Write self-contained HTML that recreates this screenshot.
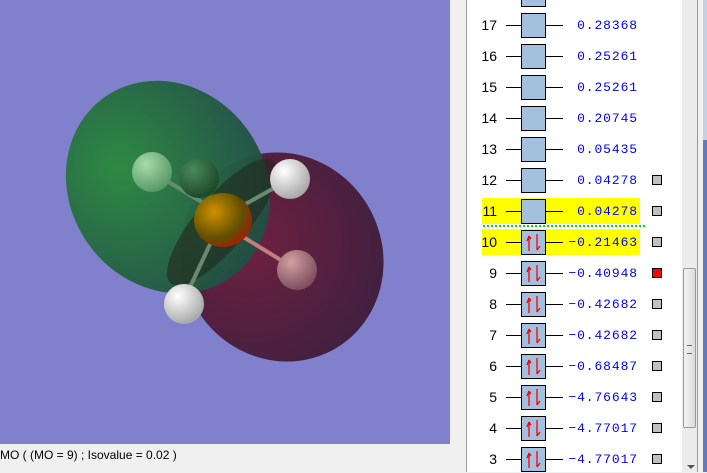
<!DOCTYPE html><html><head><style>
body{margin:0;width:707px;height:472px;overflow:hidden;background:#f0f0f0;position:relative;font-family:"Liberation Sans",sans-serif}
#vp{position:absolute;left:0;top:0;width:450px;height:444px;background:#8080cc}
#st{position:absolute;left:0;top:448px;font-size:12px;color:#000}
#list{position:absolute;left:466px;top:0;width:216px;height:472px;background:#fff;border-left:1px solid #a0a0a0}
.r{position:absolute;left:0;width:216px;height:26px;font-family:"Liberation Mono",monospace;font-size:13px}
.n{position:absolute;right:185px;top:4px;color:#000;font-family:"Liberation Sans",sans-serif;font-size:14px}
.l1{position:absolute;left:40px;width:15px;top:12px;border-top:1px solid #000}
.l2{position:absolute;left:80px;width:17px;top:12px;border-top:1px solid #000}
.b{position:absolute;left:55px;top:0;width:23px;height:23px;border:1px solid #000;background:#a3c0df}
.v{position:absolute;right:44px;top:5px;color:#0000ff;letter-spacing:0.9px}
.s{position:absolute;left:186px;top:7px;width:8px;height:8px;border:1px solid #000;background:#c0c0c0}
.hl{position:absolute;left:15px;width:158px;height:26px;background:#ffff00}
#sb{position:absolute;left:682px;top:0;width:15px;height:472px;background:#ececec;border-right:1px solid #999}
#th{position:absolute;left:683px;top:268px;width:13px;height:160px;background:linear-gradient(90deg,#f3f3f3,#dcdcdc);border:1px solid #999;border-radius:2px;box-sizing:border-box}
</style></head><body>
<div id="vp"><svg width="450" height="444">
<defs>
<radialGradient id="gg" cx="0.35" cy="0.3" r="0.8"><stop offset="0" stop-color="#2a8a3c"/><stop offset="1" stop-color="#1f4a44"/></radialGradient>
<radialGradient id="rg" cx="0.4" cy="0.35" r="0.8"><stop offset="0" stop-color="#702040"/><stop offset="1" stop-color="#3a2040"/></radialGradient>
<radialGradient id="wh" cx="0.35" cy="0.3" r="0.7"><stop offset="0" stop-color="#fff"/><stop offset="1" stop-color="#aaa"/></radialGradient>
<radialGradient id="lg" cx="0.35" cy="0.3" r="0.7"><stop offset="0" stop-color="#a8dca8"/><stop offset="1" stop-color="#5a9a6a"/></radialGradient>
<radialGradient id="dg" cx="0.35" cy="0.3" r="0.7"><stop offset="0" stop-color="#4a8a5a"/><stop offset="1" stop-color="#1e4a2a"/></radialGradient>
<radialGradient id="pk" cx="0.35" cy="0.3" r="0.7"><stop offset="0" stop-color="#d0a0a0"/><stop offset="1" stop-color="#805060"/></radialGradient>
<radialGradient id="yl" cx="0.35" cy="0.35" r="0.7"><stop offset="0" stop-color="#d09000"/><stop offset="0.7" stop-color="#605000"/><stop offset="1" stop-color="#a02000"/></radialGradient>
</defs>
<ellipse cx="282" cy="257" rx="100" ry="106" fill="url(#rg)" transform="rotate(-30 282 257)"/>
<ellipse cx="168" cy="187" rx="98" ry="110" fill="url(#gg)" opacity="0.95" transform="rotate(-35 168 187)"/>
<ellipse cx="222" cy="222" rx="26" ry="80" fill="#22281c" opacity="0.6" transform="rotate(40 222 222)"/>
<g stroke="#6a8a70" stroke-width="4">
<line x1="152" y1="172" x2="215" y2="210"/><line x1="290" y1="179" x2="235" y2="210"/>
<line x1="184" y1="300" x2="212" y2="240"/><line x1="297" y1="270" x2="240" y2="235" stroke="#c08080"/>
</g>
<circle cx="199" cy="178" r="20" fill="url(#dg)"/>
<circle cx="152" cy="172" r="20" fill="url(#lg)"/>
<ellipse cx="223" cy="220" rx="29" ry="27" fill="url(#yl)"/>
<circle cx="290" cy="179" r="20" fill="url(#wh)"/>
<circle cx="184" cy="304" r="20" fill="url(#wh)"/>
<circle cx="297" cy="270" r="20" fill="url(#pk)"/>
</svg></div>
<div id="st">MO ( (MO = 9) ; Isovalue = 0.02 )</div>
<div id="list">
<div class="hl" style="top:198px"></div><div class="hl" style="top:229px"></div>
<div style="position:absolute;left:16px;top:225px;width:162px;border-top:2px dotted #00e000"></div>
</div>
<div id="sb"></div><div id="th"><div style="position:absolute;left:3px;top:76px;width:5px;height:7px;border-top:1px solid #666;border-bottom:1px solid #666"></div></div>
<div style="position:absolute;left:687px;top:465px;border:4px solid transparent;border-top:4px solid #555"></div>
<div style="position:absolute;left:703px;top:0;width:4px;height:140px;background:#c8d0e0"></div>
<div style="position:absolute;left:703px;top:140px;width:4px;height:332px;background:#6a78b8"></div>
<div id="rows" style="position:absolute;left:466px;top:0"></div>
<script>
var d=[[18,"",0,-6],[17,"0.28368",0],[16,"0.25261",0],[15,"0.25261",0],[14,"0.20745",0],[13,"0.05435",0],[12,"0.04278",0,0,1],[11,"0.04278",0,0,1],[10,"-0.21463",1,0,1],[9,"-0.40948",1,0,2],[8,"-0.42682",1,0,1],[7,"-0.42682",1,0,1],[6,"-0.68487",1,0,1],[5,"-4.76643",1,0,1],[4,"-4.77017",1,0,1],[3,"-4.77017",1,0,1]];
var h="";
d.forEach(function(r,i){var t=i==0?-18:13+(i-1)*31;
var arr=r[2]?'<svg width="23" height="23" style="position:absolute;left:0;top:0"><path d="M7 20V5M7 5L5 10M7 5L9 8" stroke="#f00" stroke-width="1.3" fill="none"/><path d="M15 3V19M15 19L18 15" stroke="#f00" stroke-width="1.3" fill="none"/></svg>':'';
h+='<div class="r" style="top:'+t+'px">'+(i?'<span class="n">'+r[0]+'</span>':'')+'<div class="l1"></div><div class="b">'+arr+'</div><div class="l2"></div><span class="v">'+r[1].replace("-","&minus;")+'</span>'+(r[4]?'<div class="s" style="'+(r[4]==2?'background:#f00':'')+'"></div>':'')+'</div>';});
document.getElementById("rows").innerHTML=h;
</script>
</body></html>
